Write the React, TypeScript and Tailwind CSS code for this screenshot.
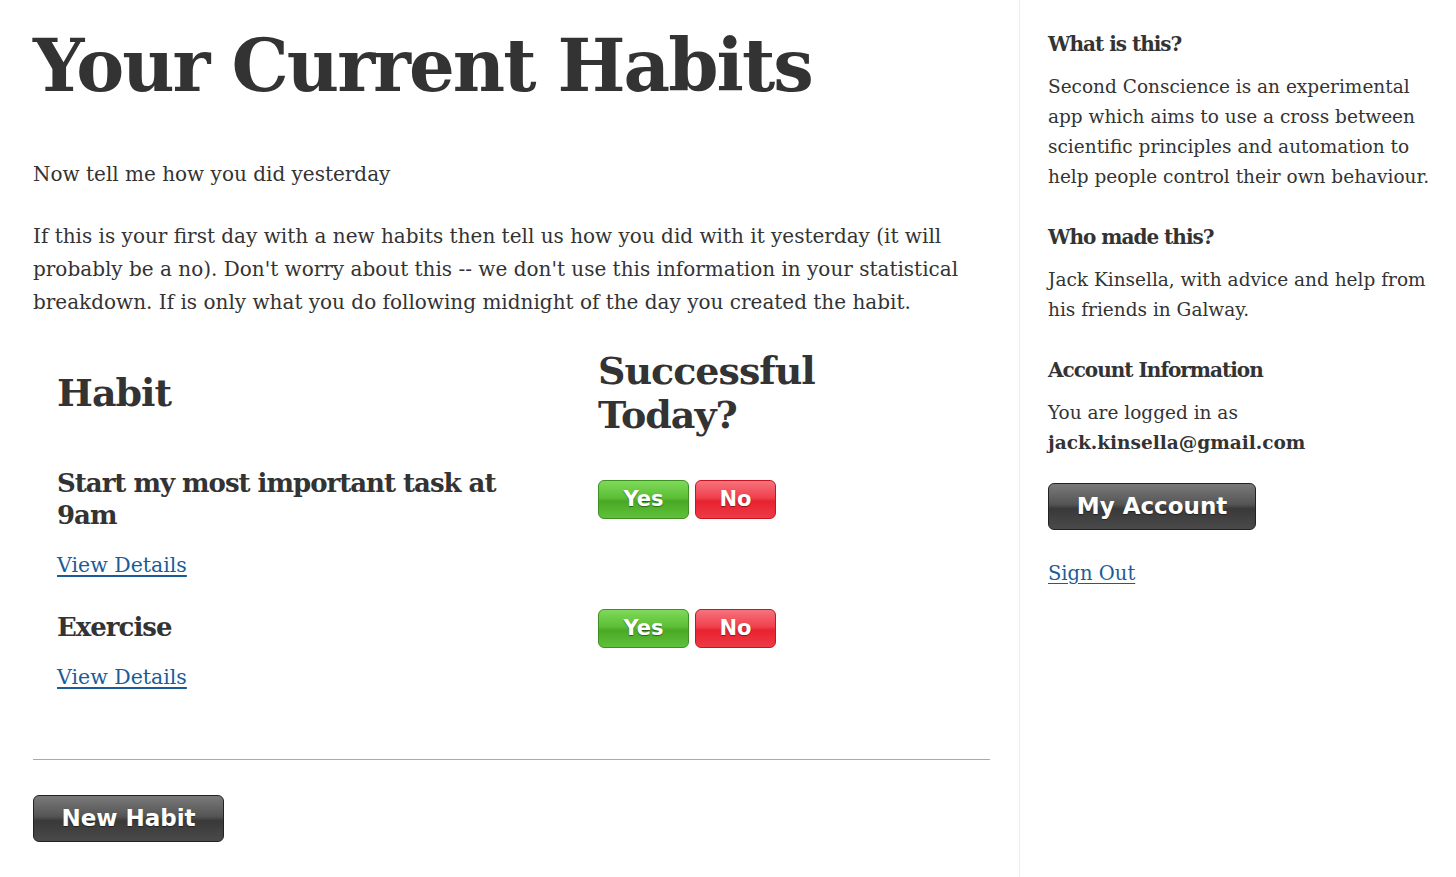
import React from "react";

const serif = { fontFamily: '"DejaVu Serif", "Liberation Serif", serif' };

function GlossButton({ label, color, className }: { label: string; color: "green" | "red" | "dark"; className: string }) {
  const styles: Record<string, string> = {
    green:
      "bg-[linear-gradient(to_bottom,#7fd95a_0%,#5cbf35_45%,#4aa825_55%,#5fc23a_100%)] border-[#3f8f22]",
    red: "bg-[linear-gradient(to_bottom,#f6737d_0%,#f0404d_45%,#e8222f_55%,#ee3a47_100%)] border-[#c8141f]",
    dark: "bg-[linear-gradient(to_bottom,#7a7a7a_0%,#555_45%,#393939_55%,#4a4a4a_100%)] border-[#222]",
  };
  return (
    <button
      className={`flex items-center justify-center border rounded-[6px] text-white font-bold [text-shadow:0_1px_1px_rgba(0,0,0,0.45)] ${styles[color]} ${className}`}
      style={{ fontFamily: '"DejaVu Sans", "Open Sans", sans-serif' }}
    >
      {label}
    </button>
  );
}

function HabitRow({
  name,
  nameClass,
  btnPad,
  namePad,
}: {
  name: string;
  nameClass?: string;
  btnPad: string;
  namePad: string;
}) {
  return (
    <>
      <div className={`pl-6 pr-4 ${namePad}`}>
        <h3 className={`text-[26px] font-bold leading-[32px] tracking-[-1px] text-[#333] ${nameClass ?? ""}`}>{name}</h3>
        <a href="#" className="mt-[20px] block text-[20.5px] leading-[28px] text-[#1b5c98] underline underline-offset-[3px] w-fit">
          View Details
        </a>
      </div>
      <div className={`flex gap-[6px] ${btnPad}`}>
        <GlossButton label="Yes" color="green" className="w-[91px] h-[39px] text-[21px]" />
        <GlossButton label="No" color="red" className="w-[81px] h-[39px] text-[21px]" />
      </div>
    </>
  );
}

export default function App() {
  return (
    <div className="flex min-h-[877px] bg-white text-[#333]" style={serif}>
      <main className="w-[1019px] shrink-0 pl-[33px] pr-[29px] pt-[21px]">
        <h1 className="text-[72px] font-bold leading-[90px] tracking-[-2px] text-[#333]">Your Current Habits</h1>
        <p className="mt-[47px] text-[20px] leading-[33px]">Now tell me how you did yesterday</p>
        <p className="mt-[29px] text-[20px] leading-[33px] w-[950px]">
          If this is your first day with a new habits then tell us how you did with it yesterday (it will probably be a
          no). Don't worry about this -- we don't use this information in your statistical breakdown. If is only what
          you do following midnight of the day you created the habit.
        </p>

        <div className="mt-[30px] grid grid-cols-[565px_1fr] items-start">
          <div className="pl-6 pt-[22px]">
            <h2 className="text-[38px] font-bold leading-[44px] tracking-[-1px]">Habit</h2>
          </div>
          <div>
            <h2 className="text-[38px] font-bold leading-[44px] tracking-[-1px]">
              Successful
              <br />
              Today?
            </h2>
          </div>
          <div className="col-span-2 h-[30px]" />
          <HabitRow
            name="Start my most important task at 9am"
            nameClass="w-[480px]"
            btnPad="pt-[13px]"
            namePad="pt-0"
          />
          <div className="col-span-2 h-[30px]" />
          <HabitRow name="Exercise" btnPad="pt-0" namePad="pt-[2px]" />
        </div>

        <hr className="mt-[68px] border-0 border-t border-[#aaa]" />

        <GlossButton label="New Habit" color="dark" className="mt-[35px] w-[191px] h-[47px] text-[23px]" />
      </main>

      <aside className="flex-1 border-l border-[#ececec] pl-[28px] pt-[29px]">
        <h3 className="text-[20px] font-bold leading-[30px] tracking-[-1px]">What is this?</h3>
        <p className="mt-[13px] text-[18.5px] leading-[30px] w-[392px]">
          Second Conscience is an experimental app which aims to use a cross between scientific principles and
          automation to help people control their own behaviour.
        </p>
        <h3 className="mt-[30px] text-[20px] font-bold leading-[30px] tracking-[-1px]">Who made this?</h3>
        <p className="mt-[13px] text-[18.5px] leading-[30px] w-[392px]">
          Jack Kinsella, with advice and help from his friends in Galway.
        </p>
        <h3 className="mt-[30px] text-[20px] font-bold leading-[30px] tracking-[-1px]">Account Information</h3>
        <p className="mt-[13px] text-[18.5px] leading-[30px]">
          You are logged in as
          <br />
          <strong className="font-bold">jack.kinsella@gmail.com</strong>
        </p>
        <GlossButton label="My Account" color="dark" className="mt-[25px] w-[208px] h-[47px] text-[23px]" />
        <a href="#" className="mt-[29px] block w-fit text-[19.5px] leading-[30px] text-[#1b5c98] underline underline-offset-[3px]">
          Sign Out
        </a>
      </aside>
    </div>
  );
}
